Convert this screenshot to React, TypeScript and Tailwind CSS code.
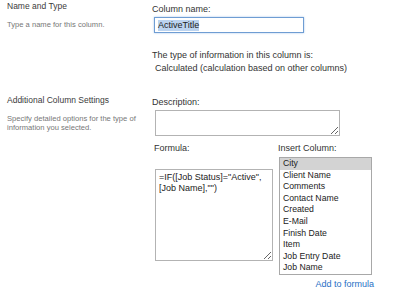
const columns = [
  "City",
  "Client Name",
  "Comments",
  "Contact Name",
  "Created",
  "E-Mail",
  "Finish Date",
  "Item",
  "Job Entry Date",
  "Job Name",
];

export default function App() {
  return (
    <div className="h-[293px] w-[400px] overflow-hidden bg-white font-['Liberation_Sans',Arial,sans-serif] text-[#333]">
      {/* name and type */}
      <div className="flex h-[90px]">
        <div className="w-[152px] shrink-0 pl-[7px]">
          <h3 className="text-[8.5px] leading-[12px] text-[#3b3b3b]">Name and Type</h3>
          <p className="mt-[8px] text-[7.6px] leading-[10px] text-[#777]">Type a name for this column.</p>
        </div>
        <div className="flex-1">
          <div className="pt-[3px] text-[9px] leading-[12px]">Column name:</div>
          <div className="ml-[2px] mt-[2px] flex h-[16px] w-[150px] items-center border border-[#6f9dd3] pl-[3px] shadow-[0_0_2px_#a9c8ec]">
            <span className="bg-[#bcd4f0] text-[9px] leading-[11px] text-[#222]">ActiveTitle</span>
          </div>
          <div className="mt-[16px] text-[9px] leading-[12px]">The type of information in this column is:</div>
          <div className="ml-[3px] mt-[1px] text-[9px] leading-[13px]">Calculated (calculation based on other columns)</div>
        </div>
      </div>

      {/* additional settings */}
      <div className="flex">
        <div className="w-[152px] shrink-0 pl-[7px] pt-[4px]">
          <h3 className="text-[8.5px] leading-[12px] text-[#3b3b3b]">Additional Column Settings</h3>
          <p className="mt-[8px] text-[7.6px] leading-[9px] text-[#777]">
            Specify detailed options for the type of
            <br />
            information you selected.
          </p>
        </div>
        <div className="flex-1 pt-[6px]">
          <div className="text-[9px] leading-[12px]">Description:</div>
          <textarea
            readOnly
            className="ml-[3px] mt-[2px] block h-[26px] w-[185px] border border-[#b3b3b3] bg-white outline-none"
          />
          <div className="mt-[6px] flex">
            <div className="w-[126px] shrink-0">
              <div className="pl-[2px] text-[9px] leading-[12px]">Formula:</div>
              <textarea
                readOnly
                value={'=IF([Job Status]="Active",\n[Job Name],"")'}
                className="ml-[3px] mt-[15px] block h-[92px] w-[118px] border border-[#b3b3b3] bg-white px-[3px] py-[2px] text-[9px] leading-[11px] text-[#222] outline-none"
              />
            </div>
            <div className="w-[96px] shrink-0">
              <div className="text-[9px] leading-[12px]">Insert Column:</div>
              <div className="ml-[1px] mt-[3px] h-[118px] w-[93px] border border-[#a8a8a8]">
                {columns.map((c, i) => (
                  <div
                    key={c}
                    className={`h-[11.6px] pl-[3px] text-[8.7px] leading-[11.6px] text-[#222] ${i === 0 ? "bg-[#d3d3d3]" : ""}`}
                  >
                    {c}
                  </div>
                ))}
              </div>
              <div className="mt-[3px] text-right text-[9px] leading-[12px] text-[#1f6fc5]">Add to formula</div>
            </div>
          </div>
        </div>
      </div>
    </div>
  );
}
